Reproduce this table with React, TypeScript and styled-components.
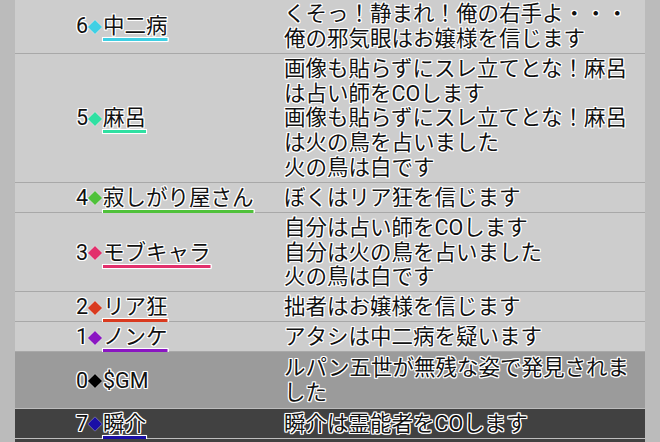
import React from 'react';
import styled, { createGlobalStyle } from 'styled-components';

type Tone = 'normal' | 'gm' | 'self';

interface LogEntry {
  no: number
  name: string
  color: string
  underline: boolean
  tone: Tone
  lines: string[]
}

const logs: LogEntry[] = [
  { no: 6, name: '中二病', color: '#3fd0e4', underline: true, tone: 'normal',
    lines: ['くそっ！静まれ！俺の右手よ・・・', '俺の邪気眼はお嬢様を信じます'] },
  { no: 5, name: '麻呂', color: '#2fe0a2', underline: true, tone: 'normal',
    lines: ['画像も貼らずにスレ立てとな！麻呂は占い師をCOします', '画像も貼らずにスレ立てとな！麻呂は火の鳥を占いました', '火の鳥は白です'] },
  { no: 4, name: '寂しがり屋さん', color: '#4fc13a', underline: true, tone: 'normal',
    lines: ['ぼくはリア狂を信じます'] },
  { no: 3, name: 'モブキャラ', color: '#e2306c', underline: true, tone: 'normal',
    lines: ['自分は占い師をCOします', '自分は火の鳥を占いました', '火の鳥は白です'] },
  { no: 2, name: 'リア狂', color: '#d93a1f', underline: true, tone: 'normal',
    lines: ['拙者はお嬢様を信じます'] },
  { no: 1, name: 'ノンケ', color: '#8a16c2', underline: true, tone: 'normal',
    lines: ['アタシは中二病を疑います'] },
  { no: 0, name: '$GM', color: '#000000', underline: false, tone: 'gm',
    lines: ['ルパン五世が無残な姿で発見されました'] },
  { no: 7, name: '瞬介', color: '#1a0fa6', underline: true, tone: 'self',
    lines: ['瞬介は霊能者をCOします'] },
];

const GlobalStyle = createGlobalStyle`
  html, body {
    margin: 0;
    padding: 0;
    background: #bbbbbb;
  }
  body {
    font-family: Roboto, "Noto Sans CJK JP", sans-serif;
  }
`;

const rowBg: Record<Tone, string> = {
  normal: '#cdcdcd',
  gm: '#9b9b9b',
  self: '#414141',
};

export default function App() {
  return (
    <>
      <GlobalStyle />
      <Screen>
        <Gutter />
        <LogTable>
          {logs.map((log) => (
            <Row key={log.no} $tone={log.tone}>
              <NameCell>
                <Num>{log.no}</Num>
                <Diamond $color={log.color} />
                <Name $color={log.color} $underline={log.underline}>{log.name}</Name>
              </NameCell>
              <MessageCell>
                {log.lines.map((line, i) => (
                  <div key={i}>{line}</div>
                ))}
              </MessageCell>
            </Row>
          ))}
          <Row $tone="self">
            <NameCell />
            <MessageCell>&nbsp;</MessageCell>
          </Row>
        </LogTable>
        <Gutter />
      </Screen>
    </>
  );
}

const Screen = styled('div')`
  display: flex;
  width: 660px;
  height: 442px;
  overflow: hidden;
  background: #bbbbbb;
`;

const Gutter = styled('div')`
  width: 15px;
  flex: none;
  background: #bbbbbb;
`;

const LogTable = styled('div')`
  width: 630px;
  flex: none;
  display: flex;
  flex-direction: column;
  margin-top: -1px;
`;

const Row = styled('div')<{ $tone: Tone }>`
  display: grid;
  grid-template-columns: 269px 1fr;
  background-color: ${props => rowBg[props.$tone]};
  border-bottom: 1px solid ${props => props.$tone === 'normal' ? '#a8a8a8' : '#bdbdbd'};
  padding: ${props => props.$tone === 'gm' ? '4px 0 2.25px' : '3px 0 1.25px'};
  font-size: 21.5px;
  line-height: 24.75px;
  color: #111;
  text-shadow: -1px -1px 0 #fff, 1px -1px 0 #fff, -1px 1px 0 #fff, 1px 1px 0 #fff,
    0 -1px 0 #fff, 0 1px 0 #fff, -1px 0 0 #fff, 1px 0 0 #fff, 0 0 2px #fff;
`;

const NameCell = styled('div')`
  display: flex;
  align-items: center;
  padding-left: 61px;
  white-space: nowrap;
`;

const Num = styled('span')`
  width: 12px;
`;

const Diamond = styled('span')<{ $color: string }>`
  width: 10px;
  height: 10px;
  margin: 0 3px 0 2px;
  background-color: ${props => props.$color};
  transform: rotate(45deg);
  box-shadow: 0 0 1px #fff;
  flex: none;
`;

const Name = styled('span')<{ $color: string, $underline: boolean }>`
  text-decoration: ${props => props.$underline ? 'underline' : 'none'};
  text-decoration-color: ${props => props.$color};
  text-decoration-thickness: 3px;
  text-underline-offset: 5px;
  text-decoration-skip-ink: none;
`;

const MessageCell = styled('div')`
  padding-right: 8px;
  word-break: break-all;
`;
